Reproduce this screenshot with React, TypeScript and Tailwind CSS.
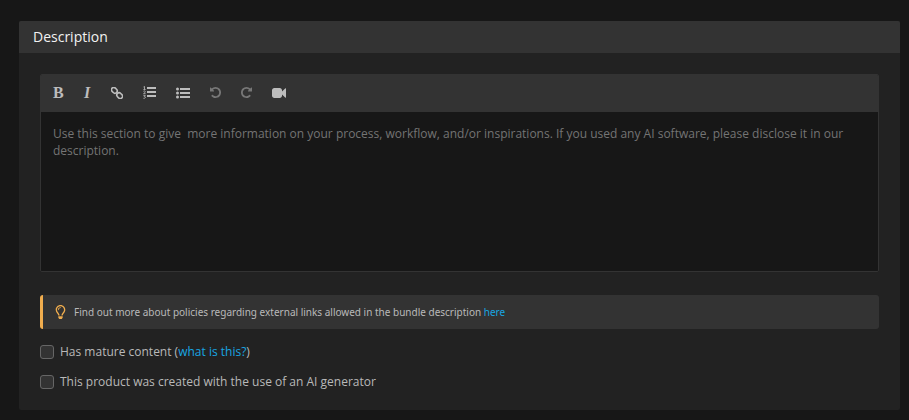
import { FaRegLightbulb } from "react-icons/fa";
import type { ReactNode } from "react";

const UNDO_PATH =
  "M1664 896q0 156-61 298t-164 245-245 164-298 61q-172 0-327-72.5t-264-204.5q-7-10-6.5-22.5t8.5-20.5l137-138q10-9 25-9 16 2 23 12 73 95 179 147t225 52q104 0 198.5-40.5t163.5-109.5 109.5-163.5 40.5-198.5-40.5-198.5-109.5-163.5-163.5-109.5-198.5-40.5q-98 0-188 35.5t-160 101.5l137 138q31 30 14 69-17 40-59 40h-448q-26 0-45-19t-19-45v-448q0-42 40-59 39-17 69 14l130 129q107-101 244.5-156.5t284.5-55.5q156 0 298 61t245 164 164 245 61 298z";

const VIDEO_PATH =
  "M1792 352v1088q0 42-39 59-13 5-25 5-27 0-45-19l-403-403v166q0 119-84.5 203.5t-203.5 84.5h-704q-119 0-203.5-84.5t-84.5-203.5v-704q0-119 84.5-203.5t203.5-84.5h704q119 0 203.5 84.5t84.5 203.5v165l403-402q18-19 45-19 12 0 25 5 39 17 39 59z";

function LinkIcon() {
  return (
    <svg viewBox="0 0 12 12" className="size-3" fill="none" stroke="currentColor" strokeWidth="1.6">
      <g transform="rotate(45 6 6)">
        <rect x="-0.9" y="3.7" width="6.2" height="4.6" rx="2.3" />
        <rect x="6.7" y="3.7" width="6.2" height="4.6" rx="2.3" />
        <path d="M5.2 6h1.6" />
      </g>
    </svg>
  );
}

function NumberedListIcon() {
  return (
    <svg viewBox="0 0 13 13" className="size-[13px]" fill="currentColor">
      <rect x="4" y="1" width="9" height="2" />
      <rect x="4" y="5" width="9" height="2" />
      <rect x="4" y="9" width="9" height="2" />
      <g fill="none" stroke="currentColor" strokeWidth="0.8">
        <path d="M0.5 1l1-0.6v3M0.4 3.5h2.2" />
        <path d="M0.4 5.3q1.1-0.9 1.8 0t-1.7 2.4h2.1" />
        <path d="M0.4 9.4h1.9l-1 1.1q1.3 0 1.1 1t-2 0.8" />
      </g>
    </svg>
  );
}

function BulletListIcon() {
  return (
    <svg viewBox="0 0 14 12" className="h-3 w-3.5" fill="currentColor">
      <circle cx="1.5" cy="2" r="1.5" />
      <circle cx="1.5" cy="6" r="1.5" />
      <circle cx="1.5" cy="10" r="1.5" />
      <rect x="4" y="1" width="10" height="2" />
      <rect x="4" y="5" width="10" height="2" />
      <rect x="4" y="9" width="10" height="2" />
    </svg>
  );
}

function Tool({ label, disabled, children }: { label: string; disabled?: boolean; children: ReactNode }) {
  return (
    <button
      type="button"
      aria-label={label}
      disabled={disabled}
      className="flex h-5 items-center justify-center text-[#bdbdbd] disabled:text-[#777777]"
    >
      {children}
    </button>
  );
}

function Check({ id, children }: { id: string; children: ReactNode }) {
  return (
    <div className="flex items-center gap-[6px]">
      <input
        id={id}
        type="checkbox"
        className="size-[14px] shrink-0 appearance-none rounded-[3px] border border-[#666666] bg-[#333333] checked:bg-[#18a6e2]"
      />
      <label htmlFor={id} className="text-[12px] leading-4 text-[#b9b9b9]">
        {children}
      </label>
    </div>
  );
}

export default function App() {
  return (
    <main className="min-h-screen bg-[#171717] pt-[21px] pr-[9px] pb-[10px] pl-[19px] font-['Open_Sans',sans-serif]">
      <section className="overflow-hidden rounded-[2px] bg-[#222222]">
        <h2 className="bg-[#333333] px-[14px] py-2 text-[14px] leading-4 text-[#f2f2f2]">Description</h2>
        <div className="px-[21px] pt-[21px] pb-5">
          <div className="overflow-hidden rounded-[2px] border border-[#333333]">
            <div role="toolbar" aria-label="Formatting" className="flex h-[37px] items-center gap-5 border-b-2 border-[#333333] bg-[#333333] px-3">
              <Tool label="Bold">
                <span className="w-[10px] text-center font-['Liberation_Serif',serif] text-[16px] leading-4 font-bold">B</span>
              </Tool>
              <Tool label="Italic">
                <span className="w-2 text-center font-['Liberation_Serif',serif] text-[16px] leading-4 font-bold italic">I</span>
              </Tool>
              <Tool label="Insert link">
                <LinkIcon />
              </Tool>
              <Tool label="Ordered list">
                <NumberedListIcon />
              </Tool>
              <Tool label="Unordered list">
                <BulletListIcon />
              </Tool>
              <Tool label="Undo" disabled>
                <svg viewBox="128 128 1536 1536" className="size-[11px]" fill="currentColor">
                  <path d={UNDO_PATH} />
                </svg>
              </Tool>
              <Tool label="Redo" disabled>
                <svg viewBox="128 128 1536 1536" className="size-[11px] -scale-x-100" fill="currentColor">
                  <path d={UNDO_PATH} />
                </svg>
              </Tool>
              <Tool label="Insert video">
                <svg viewBox="0 0 1792 1792" className="size-[14px]" fill="currentColor">
                  <path d={VIDEO_PATH} />
                </svg>
              </Tool>
            </div>
            <textarea
              aria-label="Description"
              placeholder="Use this section to give  more information on your process, workflow, and/or inspirations. If you used any AI software, please disclose it in our description."
              className="block h-[159px] w-full resize-none bg-[#171717] px-3 pt-[13px] text-[12px] leading-[17px] text-[#cccccc] outline-none placeholder:text-[#747474]"
            />
          </div>
          <div className="mt-[23px] flex items-center gap-2 rounded-[3px] border-l-3 border-[#f0ad4e] bg-[#333333] px-3 py-[9px]">
            <FaRegLightbulb className="h-[14px] w-[11px] shrink-0 text-[#f0ad4e]" />
            <p className="font-['Noto_Sans',sans-serif] text-[10px] leading-4 text-[#b9b9b9]">
              Find out more about policies regarding external links allowed in the bundle description{" "}
              <a href="#policies" className="text-[#18a6e2]">here</a>
            </p>
          </div>
          <div className="mt-[15px] flex flex-col gap-[14px]">
            <Check id="mature">
              Has mature content (<a href="#mature-content" className="text-[#18a6e2]">what is this?</a>)
            </Check>
            <Check id="ai">This product was created with the use of an AI generator</Check>
          </div>
        </div>
      </section>
    </main>
  );
}
